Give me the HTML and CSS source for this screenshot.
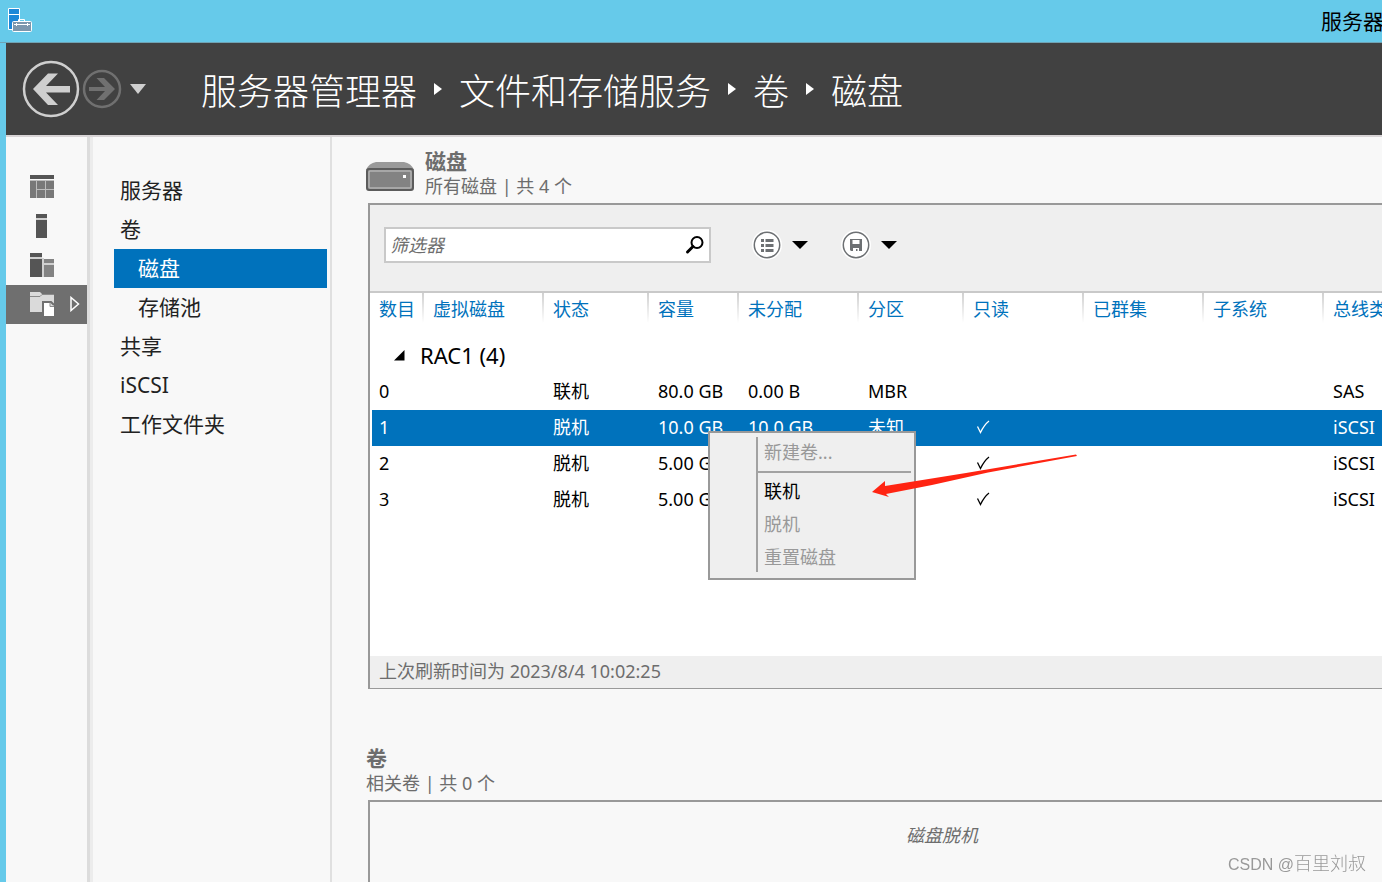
FILE: index.html
```html
<!DOCTYPE html>
<html lang="zh-CN">
<head>
<meta charset="utf-8">
<title>服务器管理器</title>
<link rel="stylesheet" href="styles.css">
</head>
<body>
<div class="window">
  <div class="titlebar">
    <svg class="app-icon" width="24" height="24" viewBox="0 0 24 24" aria-hidden="true">
      <path d="M.5.5h11v21H.5z" fill="#1e88d8" stroke="#fff"/>
      <path d="M1 6.500h10" stroke="#fff"/>
      <path d="M10.500 13.500v-2h6v2" fill="none" stroke="#fff"/>
      <rect x="4.500" y="13.500" width="19" height="10" rx="1" fill="#7c97ad" stroke="#fff"/>
      <path d="M6 16.500h16M8.500 15v3M19.500 15v3" stroke="#fff"/>
    </svg>
    <span class="window-title">服务器</span>
  </div>

  <div class="shell">
    <header class="header">
      <button class="plain" aria-label="后退">
        <svg width="58" height="58" viewBox="0 0 58 58">
          <circle cx="29" cy="29" r="27" fill="none" stroke="#cfcfcf" stroke-width="2.500"/>
          <path d="M11 29 26 13.500h10L24 26h24v6.500H24L36 45H26z" fill="#cfcfcf"/>
        </svg>
      </button>
      <button class="plain forward" aria-label="前进" disabled>
        <svg width="40" height="40" viewBox="0 0 40 40">
          <circle cx="20" cy="20" r="18" fill="none" stroke="#707070" stroke-width="2.500"/>
          <path d="M33 20 22 9h-7.500l8.500 9H7v4h16l-8.500 9H22z" fill="#707070"/>
        </svg>
      </button>
      <button class="plain history" aria-label="历史记录">
        <svg width="16" height="10" viewBox="0 0 16 10"><path d="M0 0h16L8 10z" fill="#cfcfcf"/></svg>
      </button>
      <nav class="crumbs" aria-label="路径">
        <span>服务器管理器</span>
        <svg class="sep" width="8" height="12" viewBox="0 0 8 12"><path d="M0 0l8 6-8 6z" fill="#fff"/></svg>
        <span>文件和存储服务</span>
        <svg class="sep" width="8" height="12" viewBox="0 0 8 12"><path d="M0 0l8 6-8 6z" fill="#fff"/></svg>
        <span>卷</span>
        <svg class="sep" width="8" height="12" viewBox="0 0 8 12"><path d="M0 0l8 6-8 6z" fill="#fff"/></svg>
        <span>磁盘</span>
      </nav>
    </header>

    <div class="body">
      <div class="rail">
        <button class="rail-item" aria-label="仪表板">
          <svg width="24" height="24" viewBox="0 0 24 24">
            <path d="M0 0h24v4H0z" fill="#555"/>
            <path d="M0 5h24v18H0z" fill="#bdbdbd"/>
            <path d="M0 6h6v17H0zM7 6h8v8H7zM16 6h8v8h-8zM7 15h8v8H7zM16 15h8v8h-8z" fill="#787878"/>
          </svg>
        </button>
        <button class="rail-item" aria-label="本地服务器">
          <svg width="24" height="24" viewBox="0 0 24 24"><path d="M6 0h11v4H6zM6 6h11v18H6z" fill="#555"/><path d="M6 4h11v2H6z" fill="#d0d0d0"/></svg>
        </button>
        <button class="rail-item" aria-label="所有服务器">
          <svg width="24" height="24" viewBox="0 0 24 24">
            <path d="M0 0h12v4H0zM0 6h12v18H0z" fill="#555"/><path d="M0 4h12v2H0zM12 5h2v19h-2z" fill="#d0d0d0"/>
            <path d="M14 6h10v4H14zM14 12h10v12H14z" fill="#838383"/><path d="M14 10h10v2H14z" fill="#d0d0d0"/>
          </svg>
        </button>
        <button class="rail-item rail-active" aria-label="文件和存储服务">
          <svg width="24" height="24" viewBox="0 0 24 24">
            <path d="M0 0h10l2 2h12v18H0z" fill="#dadada"/>
            <path d="M0 4.500h10l2-2h12" fill="none" stroke="#8a8a8a"/>
            <path d="M13 24V10h8l3 3" fill="none" stroke="#6f6f6f" stroke-width="2"/>
            <path d="M14 11h6v4h4v9H14z" fill="#fff"/><path d="M20 10.500v4h4" fill="none" stroke="#8a8a8a"/>
          </svg>
          <svg class="rail-arrow" width="10" height="16" viewBox="0 0 10 16"><path d="M1 1.500v13L8.500 8z" fill="none" stroke="#fff" stroke-width="1.500"/></svg>
        </button>
      </div>

      <nav class="side" aria-label="导航">
        <a class="side-link" href="#servers">服务器</a>
        <a class="side-link" href="#volumes">卷</a>
        <a class="side-link side-sub side-active" href="#disks">磁盘</a>
        <a class="side-link side-sub" href="#pools">存储池</a>
        <a class="side-link" href="#shares">共享</a>
        <a class="side-link" href="#iscsi">iSCSI</a>
        <a class="side-link" href="#workfolders">工作文件夹</a>
      </nav>

      <main class="main">
        <div class="section-head">
          <svg class="disk-icon" width="48" height="30" viewBox="0 0 48 30" aria-hidden="true">
            <path d="M0 8Q3 1 10 0h28q7 1 10 8z" fill="#9a9a9a"/>
            <rect x="1" y="7" width="46" height="21" rx="2" fill="#838383" stroke="#5c5c5c" stroke-width="2"/>
            <rect x="3" y="9" width="42" height="17" rx="1" fill="none" stroke="#b4b4b4" stroke-width="1.500"/>
            <path d="M37 13h3v3h-3z" fill="#fff"/>
          </svg>
          <div>
            <h2 class="section-title">磁盘</h2>
            <p class="section-sub">所有磁盘 | 共 4 个</p>
          </div>
        </div>

        <section class="panel">
          <div class="toolbar">
            <div class="search">
              <input class="search-input" type="text" placeholder="筛选器" aria-label="筛选器">
              <button class="plain" aria-label="搜索">
                <svg width="20" height="20" viewBox="0 0 20 20"><circle cx="12" cy="7.500" r="5.500" fill="none" stroke="#000" stroke-width="2"/><path d="M8 11.500 2.500 17" stroke="#000" stroke-width="3" stroke-linecap="round"/></svg>
              </button>
            </div>
            <button class="tool" aria-label="条件">
              <svg width="30" height="30" viewBox="0 0 30 30">
                <circle cx="15" cy="15" r="15" fill="#fff"/><circle cx="15" cy="15" r="12.700" fill="#fff" stroke="#6d7073" stroke-width="1.500"/>
                <path d="M9 9h3v3H9zM9 14h3v3H9zM9 19h3v3H9zM13.500 9h8v3h-8zM13.500 14h8v3h-8zM13.500 19h8v3h-8z" fill="#6d7073"/>
              </svg>
              <svg width="16" height="8" viewBox="0 0 16 8"><path d="M0 0h16L8 8z"/></svg>
            </button>
            <button class="tool" aria-label="保存">
              <svg width="30" height="30" viewBox="0 0 30 30">
                <circle cx="15" cy="15" r="15" fill="#fff"/><circle cx="15" cy="15" r="12.700" fill="#fff" stroke="#6d7073" stroke-width="1.500"/>
                <path d="M9 9h12v12H10l-1-1z" fill="#6d7073"/><path d="M11.500 10h7v4h-7zM12 18h6v3h-1.500v-2h-1.500v2H12z" fill="#fff"/>
              </svg>
              <svg width="16" height="8" viewBox="0 0 16 8"><path d="M0 0h16L8 8z"/></svg>
            </button>
          </div>

          <div class="grid-area">
            <table class="grid">
              <colgroup>
                <col class="c-no"><col class="c-wide"><col class="c-mid"><col class="c-cap"><col class="c-wide"><col class="c-mid"><col class="c-wide"><col class="c-wide"><col class="c-wide"><col>
              </colgroup>
              <thead>
                <tr><th>数目</th><th>虚拟磁盘</th><th>状态</th><th>容量</th><th>未分配</th><th>分区</th><th>只读</th><th>已群集</th><th>子系统</th><th>总线类</th></tr>
              </thead>
              <tbody>
                <tr class="group"><td colspan="10"><svg class="twisty" width="11" height="11" viewBox="0 0 11 11"><path d="M10.500 0v10.500H0z"/></svg>RAC1 (4)</td></tr>
                <tr><td>0</td><td></td><td>联机</td><td>80.0 GB</td><td>0.00 B</td><td>MBR</td><td></td><td></td><td></td><td>SAS</td></tr>
                <tr class="selected"><td>1</td><td></td><td>脱机</td><td>10.0 GB</td><td>10.0 GB</td><td>未知</td><td><svg class="tick" width="14" height="14" viewBox="0 0 14 14" role="img" aria-label="是"><path d="M1.500 6.500 4.500 12.500Q8 5 13 1" fill="none" stroke="currentColor" stroke-width="1.300"/></svg></td><td></td><td></td><td>iSCSI</td></tr>
                <tr><td>2</td><td></td><td>脱机</td><td>5.00 GB</td><td></td><td></td><td><svg class="tick" width="14" height="14" viewBox="0 0 14 14" role="img" aria-label="是"><path d="M1.500 6.500 4.500 12.500Q8 5 13 1" fill="none" stroke="currentColor" stroke-width="1.300"/></svg></td><td></td><td></td><td>iSCSI</td></tr>
                <tr><td>3</td><td></td><td>脱机</td><td>5.00 GB</td><td></td><td></td><td><svg class="tick" width="14" height="14" viewBox="0 0 14 14" role="img" aria-label="是"><path d="M1.500 6.500 4.500 12.500Q8 5 13 1" fill="none" stroke="currentColor" stroke-width="1.300"/></svg></td><td></td><td></td><td>iSCSI</td></tr>
              </tbody>
            </table>

            <div class="menu" role="menu">
              <div class="menu-list">
                <button class="menu-item menu-first" role="menuitem" disabled>新建卷...</button>
                <button class="menu-item" role="menuitem">联机</button>
                <button class="menu-item" role="menuitem" disabled>脱机</button>
                <button class="menu-item" role="menuitem" disabled>重置磁盘</button>
              </div>
            </div>
            <svg class="pointer" width="206" height="46" viewBox="0 0 206 46" aria-hidden="true">
              <path d="M0 38 13 27v5L94 19 204 .5l1 1.500L116 18.500 60 31 14 40l3 3z" fill="#ff2412"/>
            </svg>
          </div>

          <div class="status">上次刷新时间为 2023/8/4 10:02:25</div>
        </section>

        <div class="section-head section-second">
          <div>
            <h2 class="section-title">卷</h2>
            <p class="section-sub">相关卷 | 共 0 个</p>
          </div>
        </div>
        <section class="panel panel-empty">磁盘脱机</section>
      </main>
    </div>
  </div>
  <div class="watermark"><span class="watermark-site">CSDN @</span>百里刘叔</div>
</div>
</body>
</html>
```

FILE: styles.css
```css
* { box-sizing: border-box; }
body {
  margin: 0;
  overflow: hidden;
  background: #66caea;
  color: #000;
  font: 18px/24px "Noto Sans", "Noto Sans CJK SC", sans-serif;
}
svg { display: block; flex: none; }
button, input { font: inherit; }
h2, p { margin: 0; }
.plain { padding: 0; border: 0; background: none; }

.window { display: flex; flex-direction: column; height: 100vh; }
.titlebar { display: flex; flex: none; align-items: center; height: 43px; padding-left: 8px; border-bottom: 1px solid #6fa3b5; }
.app-icon { margin-bottom: 2px; }
.window-title { width: 61px; margin-left: auto; overflow: hidden; white-space: nowrap; font-size: 21px; line-height: 32px; }

.shell { display: flex; flex: 1; flex-direction: column; min-height: 0; margin-left: 6px; background: #f8f8f8; }
.header { display: flex; flex: none; align-items: center; height: 94px; padding-left: 16px; background: #414141; border-bottom: 2px solid #d8d4d6; }
.forward { margin-left: 2px; }
.history { margin-left: 8px; }
.crumbs { display: flex; align-items: center; margin-left: 55px; color: #fff; font-size: 36px; font-weight: 300; line-height: 48px; font-family: "Noto Sans CJK SC", sans-serif; white-space: nowrap; }
.sep { margin: 0 17px; }

.body { display: flex; flex: 1; min-height: 0; }
.rail { flex: none; width: 84px; padding-top: 31px; border-right: 3px solid #dcdcdc; }
.rail-item { display: flex; align-items: center; width: 100%; height: 39px; padding: 0 0 2px 24px; border: 0; background: none; }
.rail-active { background: #6f6f6f; }
.rail-arrow { margin-left: 16px; }

.side { flex: none; width: 242px; padding: 34px 3px 0 21px; border: solid #e0e0e0; border-width: 0 2px 0 3px; border-left-color: #ececec; }
.side-link { display: block; height: 39px; padding-left: 6px; color: #222; font-size: 21px; line-height: 38px; text-decoration: none; }
.side-sub { padding-left: 24px; }
.side-active { background: #0072bc; color: #fff; }

.main { display: flex; flex: 1; flex-direction: column; min-width: 0; padding: 12px 0 0 34px; }
.section-head { display: flex; flex: none; align-items: flex-start; gap: 11px; height: 54px; color: #6d6d6d; }
.disk-icon { margin-top: 13px; }
.section-title { font-size: 21px; line-height: 24px; }
.section-sub { line-height: 26px; }
.section-second { margin-top: 57px; }

.panel { margin-left: 2px; border: solid #999; border-width: 2px 0 1px 2px; background: #fff; }
.toolbar { display: flex; align-items: center; height: 88px; padding: 0 0 6px 14px; background: #efefef; border-bottom: 2px solid #c9c9c9; }
.search { display: flex; align-items: center; width: 327px; height: 36px; margin-right: 41px; padding-right: 4px; border: 2px solid #c9c9c9; background: #fff; }
.search-input { flex: 1; min-width: 0; padding: 0 4px; border: 0; outline: 0; background: none; }
.search-input::placeholder { color: #6d6d6d; font-style: italic; opacity: 1; }
.tool { display: flex; align-items: center; gap: 10px; margin-right: 33px; padding: 0; border: 0; background: none; }

.grid-area { position: relative; min-height: 363px; padding-left: 2px; }
.grid { width: 100%; table-layout: fixed; border-collapse: collapse; }
.c-no { width: 52px; }
.c-wide { width: 120px; }
.c-mid { width: 105px; }
.c-cap { width: 90px; }
.grid th, .grid td { height: 36px; padding: 0 0 2px 9px; overflow: hidden; white-space: nowrap; text-align: left; }
.grid th:first-child, .grid td:first-child { padding-left: 7px; }
.grid th {
  padding-bottom: 4px;
  color: #0072bc;
  font-weight: 400;
  background: linear-gradient(#d0d0d0, #fff) right top / 2px 30px no-repeat;
}
.grid th:last-child { background: none; }
.grid .group td { height: 45px; padding: 6px 0 0 22px; font-size: 22px; }
.twisty { display: inline-block; margin-right: 15px; vertical-align: 3px; }
.tick { margin-left: 3px; }
.selected { background: #0072bc; color: #fff; }

.menu { position: absolute; left: 338px; top: 138px; width: 208px; padding: 4px 3px 6px 46px; border: 2px solid #999; background: #efefef; }
.menu-list { border-left: 2px solid #a2a2a2; }
.menu-item { display: block; width: 100%; height: 33px; padding: 3px 0 0 6px; border: 0; background: none; color: #000; text-align: left; }
.menu-item:disabled { color: #999; }
.menu-first { height: 36px; padding-bottom: 8px; border-bottom: 2px solid #a2a2a2; }
.pointer { position: absolute; left: 502px; top: 161px; }

.status { height: 32px; padding-left: 9px; background: #efefef; color: #6d6d6d; line-height: 30px; }
.panel-empty { flex: 1; padding-top: 21px; padding-right: 0; padding-left: 132px; border-bottom: 0; background: #f8f8f8; color: #6d6d6d; font-style: italic; text-align: center; }
.watermark { position: fixed; right: 16px; bottom: 5px; color: #999; font: 18px/24px "Liberation Sans", "Noto Sans CJK SC", sans-serif; font-weight: 300; }
.watermark-site { font-size: 16px; }
```
